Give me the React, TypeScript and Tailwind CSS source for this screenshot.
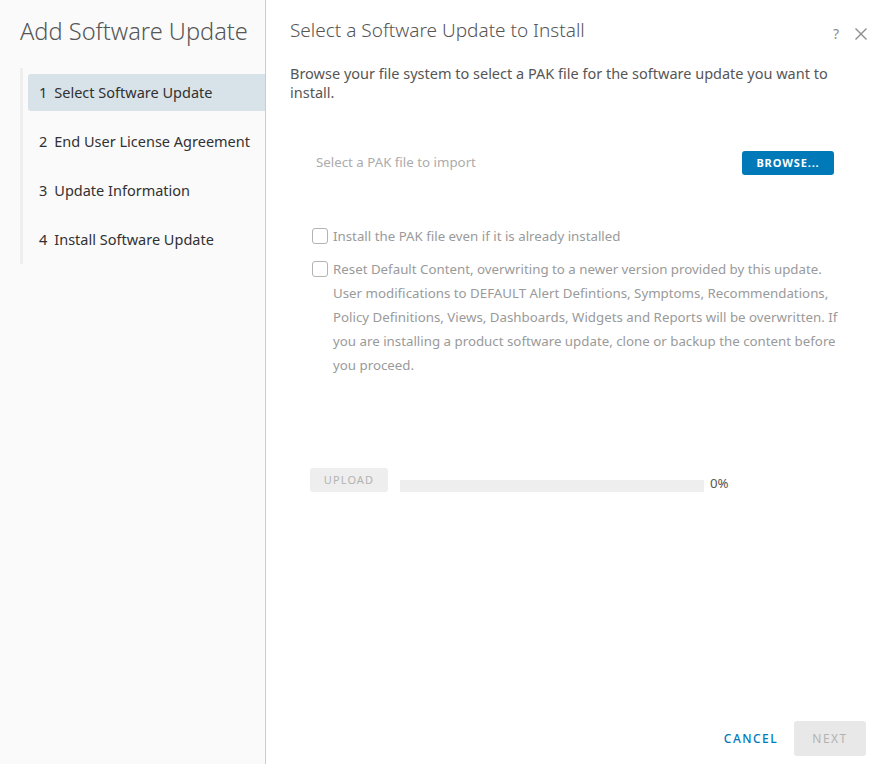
const steps = [
  "Select Software Update",
  "End User License Agreement",
  "Update Information",
  "Install Software Update",
];

function Checkbox() {
  return <span className="block h-4 w-4 shrink-0 rounded-[3px] border border-[#b3b3b3] bg-white" />;
}

export default function App() {
  return (
    <div className="flex h-[764px] w-[879px] overflow-hidden bg-white text-[#565656] [font-family:'Noto_Sans','Open_Sans',sans-serif]">
      {/* Sidebar */}
      <aside className="flex w-[266px] shrink-0 flex-col border-r border-[#cccccc] bg-[#fafafa]">
        <h1 className="pl-[20px] pt-[16px] text-[23.6px] font-light leading-[30px] text-[#565656]">
          Add Software Update
        </h1>
        <div className="ml-[20px] mt-[22px] border-l-[3px] border-[#eeeeee] pt-[6px] pb-[6px]">
          {steps.map((s, i) => (
            <div
              key={s}
              className={
                "ml-[5px] flex h-[37px] items-center rounded-l-[3px] pl-[11px] text-[14.5px] text-[#313131] " +
                (i === 0 ? "bg-[#d8e3e9]" : "mt-[12px]")
              }
            >
              <span className="mr-[7px]">{i + 1}</span>
              {s}
            </div>
          ))}
        </div>
      </aside>

      {/* Main */}
      <main className="flex flex-1 flex-col">
        <div className="flex items-start justify-between pl-[24px] pr-[10px] pt-[17px]">
          <h2 className="text-[19px] font-light leading-[26px]">Select a Software Update to Install</h2>
          <div className="mt-[8px] flex items-center gap-[14px] text-[#8c8c8c]">
            <span className="text-[14px] leading-none">?</span>
            <svg width="16" height="16" viewBox="0 0 16 16" className="mt-[1px]">
              <path d="M2.5 2.5 L13.5 13.5 M13.5 2.5 L2.5 13.5" stroke="#8c8c8c" strokeWidth="1.4" fill="none" />
            </svg>
          </div>
        </div>

        <p className="mt-[21px] pl-[24px] pr-[40px] text-[14.5px] leading-[19px]">
          Browse your file system to select a PAK file for the software update you want to install.
        </p>

        <div className="mt-[49px] flex items-center justify-between pl-[50px] pr-[45px]">
          <span className="text-[13.3px] text-[#acacac]">Select a PAK file to import</span>
          <button className="h-[24px] w-[92px] rounded-[3px] bg-[#0079b8] text-[11px] font-bold tracking-[0.08em] text-white">
            BROWSE...
          </button>
        </div>

        <div className="mt-[53px] flex flex-col gap-[16px] pl-[46px] pr-[20px] text-[13.3px] text-[#9a9a9a]">
          <label className="flex items-start gap-[5px] leading-[17px]">
            <Checkbox />
            <span>Install the PAK file even if it is already installed</span>
          </label>
          <label className="flex items-start gap-[5px] leading-[24px]">
            <Checkbox />
            <span className="-mt-[4px] whitespace-nowrap">
              Reset Default Content, overwriting to a newer version provided by this update.
              <br />
              User modifications to DEFAULT Alert Defintions, Symptoms, Recommendations,
              <br />
              Policy Definitions, Views, Dashboards, Widgets and Reports will be overwritten. If
              <br />
              you are installing a product software update, clone or backup the content before
              <br />
              you proceed.
            </span>
          </label>
        </div>

        <div className="mt-[89px] flex items-center pl-[44px]">
          <button className="h-[24px] w-[78px] rounded-[3px] bg-[#eeeeee] text-[11px] tracking-[0.1em] text-[#b3b3b3]">
            UPLOAD
          </button>
          <div className="ml-[12px] mt-[12px] h-[12px] w-[304px] bg-[#eeeeee]" />
          <span className="ml-[6px] mt-[8px] text-[13.3px]">0%</span>
        </div>

        <div className="mt-auto flex items-center justify-end gap-[14px] pb-[8px] pr-[13px]">
          <button className="mr-[2px] text-[12px] font-medium tracking-[0.12em] text-[#0079b8]">CANCEL</button>
          <button className="h-[35px] w-[72px] rounded-[3px] bg-[#e8e8e8] text-[12px] tracking-[0.12em] text-[#b3b3b3]">
            NEXT
          </button>
        </div>
      </main>
    </div>
  );
}
